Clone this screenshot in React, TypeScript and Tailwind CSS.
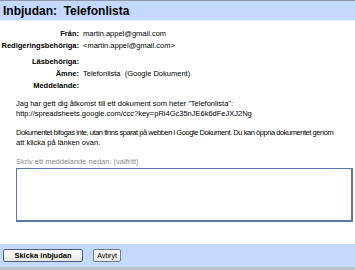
import React from "react";

const rows = [
  { label: "Från:", value: "martin.appel@gmail.com", cls: "mt-0" },
  { label: "Redigeringsbehöriga:", value: "<martin.appel@gmail.com>", cls: "mt-0" },
  { label: "Läsbehöriga:", value: "", cls: "mt-[4px]" },
  { label: "Ämne:", value: "Telefonlista  (Google Dokument)", cls: "mt-0" },
  { label: "Meddelande:", value: "", cls: "mt-[0px]" },
];

export default function App() {
  return (
    <div
      className="w-[355px] h-[270px] bg-white flex flex-col overflow-hidden text-[#000]"
      style={{ fontFamily: '"Liberation Sans", Arial, sans-serif' }}
    >
      <div className="h-[1px] bg-[#8d98a6]" />
      <div className="h-[20px] bg-[#c3d9ff] flex items-center pl-[3px] border-b border-[#e4eeff]">
        <span className="text-[12px] font-bold whitespace-pre">Inbjudan:  Telefonlista</span>
      </div>

      <div className="mt-[7px] flex flex-col">
        {rows.map((r) => (
          <div key={r.label} className={`flex h-[12px] items-center ${r.cls}`}>
            <div className="w-[79px] text-right text-[7.5px] font-bold whitespace-nowrap">
              {r.label}
            </div>
            <div className="pl-[4px] text-[7.5px] whitespace-pre">{r.value}</div>
          </div>
        ))}
      </div>

      <div className="pl-[16px] mt-[7px] text-[7.5px] leading-[10px] whitespace-nowrap">
        <p>Jag har gett dig åtkomst till ett dokument som heter "Telefonlista":</p>
        <p>http://spreadsheets.google.com/ccc?key=pRi4Gc35nJE6k6dFeJXJ2Ng</p>
        <p className="mt-[9px] tracking-[-0.45px]">
          Dokumentet bifogas inte, utan finns sparat på webben i Google Dokument. Du kan öppna dokumentet genom
        </p>
        <p>att klicka på länken ovan.</p>
        <p className="mt-[9px] text-[#8c8c8c]">Skriv ett meddelande nedan: (valfritt)</p>
      </div>

      <div className="ml-[16px] mt-[1px] w-[337px] h-[54px] border border-[#5b77a6] border-r-2 border-b-2 bg-white" />

      <div className="flex-1" />

      <div className="h-[23px] bg-[#c3d9ff] flex items-center pl-[3px] gap-[10px]">
        <button className="w-[80px] h-[13px] rounded-[2px] border border-[#4a5f86] bg-gradient-to-b from-white to-[#e8e8e2] text-[7.5px] font-bold leading-none">
          Skicka inbjudan
        </button>
        <button className="w-[28px] h-[13px] rounded-[2px] border border-[#6f7a86] bg-gradient-to-b from-white to-[#e8e8e2] text-[7px] leading-none">
          Avbryt
        </button>
      </div>
      <div className="h-[3px] bg-[#b9c2cc]" />
    </div>
  );
}
